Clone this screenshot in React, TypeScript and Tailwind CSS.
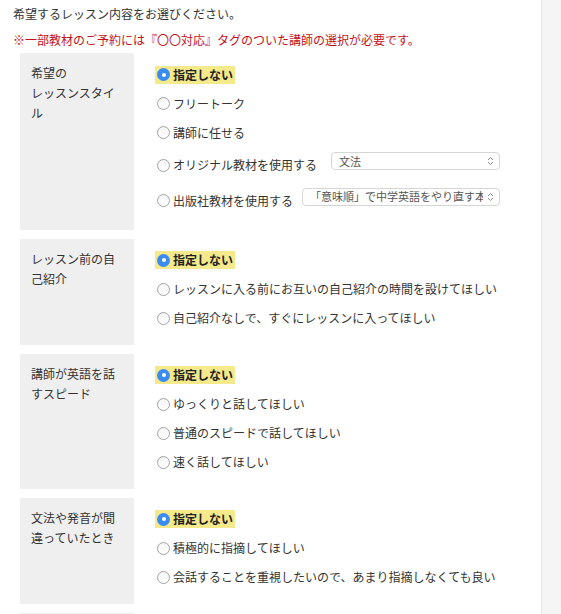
import React from 'react';

type Option = { label: string; select?: { text: string; width: string }; rowH?: string };

type Section = { title: React.ReactNode; options: Option[] };

const sections: Section[] = [
  {
    title: (
      <>
        希望の
        <br />
        レッスンスタイル
      </>
    ),
    options: [
      { label: '指定しない' },
      { label: 'フリートーク' },
      { label: '講師に任せる' },
      { label: 'オリジナル教材を使用する', select: { text: '文法', width: 'w-[169px] ml-[12px]' }, rowH: 'h-[36.5px]' },
      {
        label: '出版社教材を使用する',
        select: { text: '「意味順」で中学英語をやり直す本', width: 'w-[198px] ml-[7px]' },
        rowH: 'h-[34px]',
      },
    ],
  },
  {
    title: 'レッスン前の自己紹介',
    options: [
      { label: '指定しない' },
      { label: 'レッスンに入る前にお互いの自己紹介の時間を設けてほしい' },
      { label: '自己紹介なしで、すぐにレッスンに入ってほしい' },
    ],
  },
  {
    title: '講師が英語を話すスピード',
    options: [
      { label: '指定しない' },
      { label: 'ゆっくりと話してほしい' },
      { label: '普通のスピードで話してほしい' },
      { label: '速く話してほしい' },
    ],
  },
  {
    title: '文法や発音が間違っていたとき',
    options: [
      { label: '指定しない' },
      { label: '積極的に指摘してほしい' },
      { label: '会話することを重視したいので、あまり指摘しなくても良い' },
    ],
  },
  {
    title: '講師の話し方',
    options: [{ label: '指定しない' }, { label: '優しく話してほしい' }],
  },
];

const Radio = ({ checked }: { checked: boolean }) =>
  checked ? (
    <span className="flex h-[13px] w-[13px] shrink-0 items-center justify-center rounded-full bg-[#3a8cf2]">
      <span className="h-[4px] w-[4px] rounded-full bg-white" />
    </span>
  ) : (
    <span className="h-[13px] w-[13px] shrink-0 rounded-full border border-[#a3a3a3] bg-gradient-to-b from-[#f4f4f4] to-white" />
  );

const FakeSelect = ({ text, width }: { text: string; width: string }) => (
  <div
    className={`mb-[8px] flex h-[18px] items-center rounded-[4px] border border-[#d6d6d6] bg-white pl-[7px] pr-[5px] text-[11px] text-[#555] ${width}`}
  >
    <span className="flex-1 overflow-hidden whitespace-nowrap">{text}</span>
    <svg width="7" height="10" viewBox="0 0 7 10" className="ml-[4px] shrink-0" fill="none" stroke="#8a8a8a" strokeWidth="1">
      <path d="M1 4 L3.5 1.5 L6 4" />
      <path d="M1 6 L3.5 8.5 L6 6" />
    </svg>
  </div>
);

export default function App() {
  return (
    <div className="flex h-[614px] w-[561px] overflow-hidden bg-white font-['Noto_Sans_CJK_JP',sans-serif] text-[12px] text-[#333]">
      <div className="w-[541px] shrink-0 pl-[13px]">
        <p className="mt-[4px] leading-[20px]">希望するレッスン内容をお選びください。</p>
        <p className="mt-[6px] leading-[20px] text-[#c41019]">
          ※一部教材のご予約には『〇〇対応』タグのついた講師の選択が必要です。
        </p>

        <div className="ml-[7px] mt-[3px] flex flex-col gap-[8.5px]">
          {sections.map((s, i) => (
            <div key={i} className="flex">
              <div className="w-[114px] shrink-0 bg-[#efefef] pl-[11px] pr-[12px] pt-[10px] leading-[20px]">
                {s.title}
              </div>
              <div className="flex flex-col pb-[12.5px] pl-[21px] pt-[7px]">
                {s.options.map((o, j) => (
                  <div key={j} className={`flex items-center ${o.rowH ?? 'h-[29px]'}`}>
                    <span
                      className={`flex h-[18px] items-center gap-[3px] px-[2px] whitespace-nowrap ${
                        j === 0 ? 'bg-[#f4e98b] font-bold text-[#222]' : ''
                      }`}
                    >
                      <Radio checked={j === 0} />
                      {o.label}
                    </span>
                    {o.select && <FakeSelect text={o.select.text} width={o.select.width} />}
                  </div>
                ))}
              </div>
            </div>
          ))}
        </div>
      </div>
      <div className="flex-1 border-l border-[#e6e6e6] bg-[#f5f5f5]" />
    </div>
  );
}
